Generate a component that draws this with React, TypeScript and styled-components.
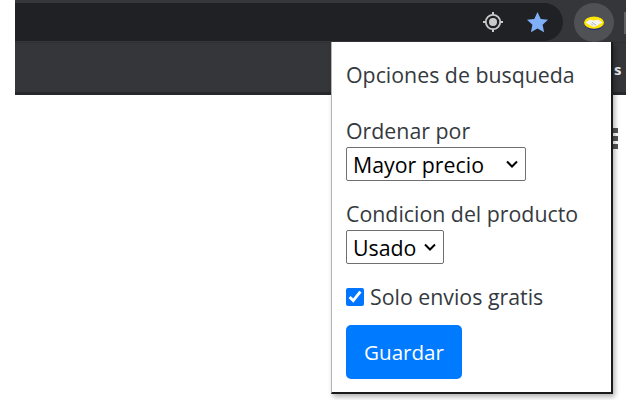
import React from "react";
import styled, { createGlobalStyle } from "styled-components";

const Global = createGlobalStyle`
  html, body { margin: 0; padding: 0; background: #fff; }
  body { width: 640px; height: 400px; overflow: hidden; font-family: "Open Sans", "Noto Sans", sans-serif; }
`;

const Page = styled.div`
  position: relative;
  width: 640px;
  height: 400px;
  padding: 0 14px 0 15px;
  box-sizing: border-box;
  background: #fff;
  overflow: hidden;
`;

const Browser = styled.div`
  display: flex;
  flex-direction: column;
`;

const Toolbar = styled.div`
  height: 42px;
  box-sizing: border-box;
  padding: 3px 0 1px;
  background: #35363a;
  display: flex;
  align-items: stretch;
`;

const Omnibox = styled.div`
  width: 548px;
  background: #202124;
  border-radius: 0 19px 19px 0;
  display: flex;
  align-items: center;
  justify-content: flex-end;
  gap: 20px;
  padding-right: 13px;
  box-sizing: border-box;
`;

const IconSlot = styled.div`
  width: 25px;
  height: 25px;
  display: flex;
  align-items: center;
  justify-content: center;
`;

const ExtensionButton = styled.div`
  width: 40px;
  height: 39px;
  margin-left: 11px;
  border-radius: 50%;
  background: #505154;
  display: flex;
  align-items: center;
  justify-content: center;
`;

const Divider = styled.div`
  width: 2px;
  height: 22px;
  margin: 9px 0 0 10px;
  background: #5f6064;
`;

const BookmarkBar = styled.div`
  height: 53px;
  box-sizing: border-box;
  background: #35363a;
  border-bottom: 3px solid #27282b;
  border-top: 1px solid #2f3033;
`;

const Popup = styled.form`
  position: absolute;
  left: 331px;
  top: 42px;
  width: 282px;
  height: 352px;
  box-sizing: border-box;
  padding: 19px 14px 0 14px;
  background: #fff;
  border-left: 1px solid #b5b5b5;
  border-right: 2px solid #1a1a1a;
  border-bottom: 2px solid #1a1a1a;
  box-shadow: 2px 3px 5px rgba(0, 0, 0, 0.3);
  color: #343a40;
  font-family: "Open Sans", "Noto Sans", sans-serif;
  font-size: 21.33px;
  line-height: 28px;
  display: flex;
  flex-direction: column;
  align-items: flex-start;
`;

const Title = styled.div`
  margin-bottom: 28px;
  height: 28px;
`;

const FieldLabel = styled.label`
  display: block;
  height: 28px;
  margin-bottom: 2px;
`;

const chevron = encodeURIComponent(
  '<svg xmlns="http://www.w3.org/2000/svg" width="12" height="8" viewBox="0 0 12 8"><path d="M1 1.5l5 5 5-5" fill="none" stroke="#000" stroke-width="2"/></svg>'
);

const Dropdown = styled.select<{ $width: number }>`
  appearance: none;
  width: ${(p) => p.$width}px;
  height: 34px;
  margin-bottom: 19px;
  padding: 0 0 0 6px;
  box-sizing: border-box;
  border: 1px solid #6f6f6f;
  border-radius: 2px;
  background: #fff url("data:image/svg+xml,${chevron}") no-repeat right 7px center;
  color: #000;
  font-family: inherit;
  font-size: 21.33px;
`;

const CheckRow = styled.label`
  display: flex;
  align-items: center;
  gap: 6px;
  height: 28px;
  margin-bottom: 14px;
`;

const Check = styled.input`
  width: 18px;
  height: 18px;
  margin: 0;
  accent-color: #0075ff;
`;

const SaveButton = styled.button`
  width: 116px;
  height: 54px;
  border: none;
  border-radius: 5px;
  background: #007bff;
  color: #fff;
  font-family: inherit;
  font-size: 20.6px;
`;

const PeekText = styled.span`
  position: absolute;
  left: 614px;
  top: 59px;
  color: #e8eaed;
  font: bold 15px "Open Sans", sans-serif;
`;

const PeekDots = styled.div`
  position: absolute;
  left: 613px;
  top: 128px;
  width: 5px;
  height: 22px;
  background: repeating-linear-gradient(#555 0 5px, #fff 5px 8px);
`;

export default function App() {
  return (
    <Page>
      <Global />
      <Browser>
        <Toolbar>
          <Omnibox>
            <IconSlot>
              <svg width="22" height="22" viewBox="0 0 22 22" fill="none">
                <circle cx="11" cy="11" r="7.2" stroke="#c9cacc" strokeWidth="1.8" />
                <circle cx="11" cy="11" r="4" fill="#c9cacc" />
                <path d="M11 1v3M11 18v3M1 11h3M18 11h3" stroke="#c9cacc" strokeWidth="2" />
              </svg>
            </IconSlot>
            <IconSlot>
              <svg width="23" height="22" viewBox="0 0 23 22">
                <path d="M11.5 1l3.2 7 7.3.8-5.4 5 1.5 7.4-6.6-3.8-6.6 3.8 1.5-7.4-5.4-5 7.3-.8z" fill="#7fb0f9" />
              </svg>
            </IconSlot>
          </Omnibox>
          <ExtensionButton>
            <svg width="22" height="16" viewBox="0 0 22 16">
              <ellipse cx="11" cy="8.4" rx="10" ry="6.8" fill="#2d3277" />
              <ellipse cx="11" cy="7.6" rx="10" ry="6.2" fill="#ffe600" />
              <path d="M2.5 7.5l4.5-3 4 1 4-1 4.5 3-5 3-3.5 1.5-3.5-1.5z" fill="#f4f4f4" />
              <path d="M9 7l2 2 2 1M8 8.5l2 2" stroke="#9a9a9a" strokeWidth="0.7" fill="none" />
            </svg>
          </ExtensionButton>
          <Divider />
        </Toolbar>
        <BookmarkBar />
      </Browser>
      <PeekText>s</PeekText>
      <PeekDots />
      <Popup>
        <Title>Opciones de busqueda</Title>
        <FieldLabel htmlFor="orden">Ordenar por</FieldLabel>
        <Dropdown id="orden" $width={180} defaultValue="mayor">
          <option value="mayor">Mayor precio</option>
          <option value="menor">Menor precio</option>
        </Dropdown>
        <FieldLabel htmlFor="cond">Condicion del producto</FieldLabel>
        <Dropdown id="cond" $width={98} defaultValue="usado">
          <option value="usado">Usado</option>
          <option value="nuevo">Nuevo</option>
        </Dropdown>
        <CheckRow>
          <Check type="checkbox" defaultChecked />
          Solo envios gratis
        </CheckRow>
        <SaveButton type="button">Guardar</SaveButton>
      </Popup>
    </Page>
  );
}
